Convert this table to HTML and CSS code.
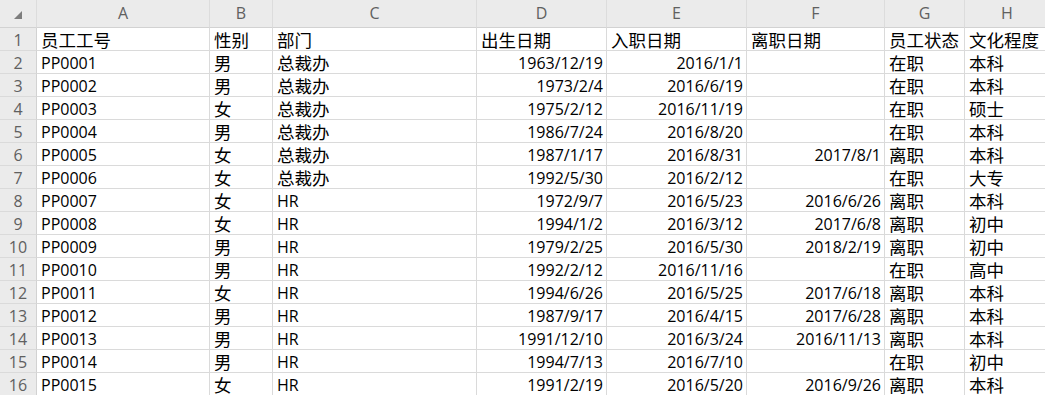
FILE: index.html
```html
<!DOCTYPE html>
<html lang="zh-CN">
<head>
<meta charset="utf-8">
<title>员工信息表</title>
<link rel="stylesheet" href="styles.css">
</head>
<body>
<div class="sheet">
  <div class="row head">
    <div class="corner"></div>
    <div class="col">A</div><div class="col">B</div><div class="col">C</div><div class="col">D</div>
    <div class="col">E</div><div class="col">F</div><div class="col">G</div><div class="col">H</div>
  </div>
  <div class="row">
    <div class="num">1</div>
    <div class="c zh">员工工号</div><div class="c zh">性别</div><div class="c zh">部门</div><div class="c zh">出生日期</div>
    <div class="c zh">入职日期</div><div class="c zh">离职日期</div><div class="c zh">员工状态</div><div class="c zh">文化程度</div>
  </div>
  <div class="row">
    <div class="num">2</div>
    <div class="c">PP0001</div><div class="c zh">男</div><div class="c zh">总裁办</div><div class="c r">1963/12/19</div>
    <div class="c r">2016/1/1</div><div class="c r"></div><div class="c zh">在职</div><div class="c zh">本科</div>
  </div>
  <div class="row">
    <div class="num">3</div>
    <div class="c">PP0002</div><div class="c zh">男</div><div class="c zh">总裁办</div><div class="c r">1973/2/4</div>
    <div class="c r">2016/6/19</div><div class="c r"></div><div class="c zh">在职</div><div class="c zh">本科</div>
  </div>
  <div class="row">
    <div class="num">4</div>
    <div class="c">PP0003</div><div class="c zh">女</div><div class="c zh">总裁办</div><div class="c r">1975/2/12</div>
    <div class="c r">2016/11/19</div><div class="c r"></div><div class="c zh">在职</div><div class="c zh">硕士</div>
  </div>
  <div class="row">
    <div class="num">5</div>
    <div class="c">PP0004</div><div class="c zh">男</div><div class="c zh">总裁办</div><div class="c r">1986/7/24</div>
    <div class="c r">2016/8/20</div><div class="c r"></div><div class="c zh">在职</div><div class="c zh">本科</div>
  </div>
  <div class="row">
    <div class="num">6</div>
    <div class="c">PP0005</div><div class="c zh">女</div><div class="c zh">总裁办</div><div class="c r">1987/1/17</div>
    <div class="c r">2016/8/31</div><div class="c r">2017/8/1</div><div class="c zh">离职</div><div class="c zh">本科</div>
  </div>
  <div class="row">
    <div class="num">7</div>
    <div class="c">PP0006</div><div class="c zh">女</div><div class="c zh">总裁办</div><div class="c r">1992/5/30</div>
    <div class="c r">2016/2/12</div><div class="c r"></div><div class="c zh">在职</div><div class="c zh">大专</div>
  </div>
  <div class="row">
    <div class="num">8</div>
    <div class="c">PP0007</div><div class="c zh">女</div><div class="c">HR</div><div class="c r">1972/9/7</div>
    <div class="c r">2016/5/23</div><div class="c r">2016/6/26</div><div class="c zh">离职</div><div class="c zh">本科</div>
  </div>
  <div class="row">
    <div class="num">9</div>
    <div class="c">PP0008</div><div class="c zh">女</div><div class="c">HR</div><div class="c r">1994/1/2</div>
    <div class="c r">2016/3/12</div><div class="c r">2017/6/8</div><div class="c zh">离职</div><div class="c zh">初中</div>
  </div>
  <div class="row">
    <div class="num">10</div>
    <div class="c">PP0009</div><div class="c zh">男</div><div class="c">HR</div><div class="c r">1979/2/25</div>
    <div class="c r">2016/5/30</div><div class="c r">2018/2/19</div><div class="c zh">离职</div><div class="c zh">初中</div>
  </div>
  <div class="row">
    <div class="num">11</div>
    <div class="c">PP0010</div><div class="c zh">男</div><div class="c">HR</div><div class="c r">1992/2/12</div>
    <div class="c r">2016/11/16</div><div class="c r"></div><div class="c zh">在职</div><div class="c zh">高中</div>
  </div>
  <div class="row">
    <div class="num">12</div>
    <div class="c">PP0011</div><div class="c zh">女</div><div class="c">HR</div><div class="c r">1994/6/26</div>
    <div class="c r">2016/5/25</div><div class="c r">2017/6/18</div><div class="c zh">离职</div><div class="c zh">本科</div>
  </div>
  <div class="row">
    <div class="num">13</div>
    <div class="c">PP0012</div><div class="c zh">男</div><div class="c">HR</div><div class="c r">1987/9/17</div>
    <div class="c r">2016/4/15</div><div class="c r">2017/6/28</div><div class="c zh">离职</div><div class="c zh">本科</div>
  </div>
  <div class="row">
    <div class="num">14</div>
    <div class="c">PP0013</div><div class="c zh">男</div><div class="c">HR</div><div class="c r">1991/12/10</div>
    <div class="c r">2016/3/24</div><div class="c r">2016/11/13</div><div class="c zh">离职</div><div class="c zh">本科</div>
  </div>
  <div class="row">
    <div class="num">15</div>
    <div class="c">PP0014</div><div class="c zh">男</div><div class="c">HR</div><div class="c r">1994/7/13</div>
    <div class="c r">2016/7/10</div><div class="c r"></div><div class="c zh">在职</div><div class="c zh">初中</div>
  </div>
  <div class="row">
    <div class="num">16</div>
    <div class="c">PP0015</div><div class="c zh">女</div><div class="c">HR</div><div class="c r">1991/2/19</div>
    <div class="c r">2016/5/20</div><div class="c r">2016/9/26</div><div class="c zh">离职</div><div class="c zh">本科</div>
  </div>
</div>
</body>
</html>
```

FILE: styles.css
```css
html, body {
  margin: 0;
  padding: 0;
  background: #ffffff;
  overflow: hidden;
}

.sheet {
  width: 1045px;
  height: 395px;
  overflow: hidden;
  font-family: "Open Sans", "Noto Sans CJK SC", sans-serif;
  font-size: 16px;
  color: #000;
}

.row {
  display: grid;
  grid-template-columns: 37px 173px 63px 204px 130px 140px 138px 80px 85px;
  height: 23px;
}

.row.head {
  height: 28px;
}

.row > div {
  box-sizing: border-box;
  border-right: 1px solid #dadada;
  border-bottom: 1px solid #dadada;
  white-space: nowrap;
  overflow: hidden;
}

.corner {
  background: #ebebeb;
  display: flex;
  justify-content: flex-end;
  align-items: flex-end;
  padding: 0 14px 8px 0;
}

.corner::after {
  content: "";
  width: 8px;
  height: 8px;
  background: #7d7d7d;
  clip-path: polygon(100% 0, 100% 100%, 0 100%);
}

.col {
  background: #ebebeb;
  color: #606060;
  text-align: center;
  padding-top: 4px;
  line-height: 19px;
}

.row.head > div {
  border-bottom-color: #d2d2d2;
  border-right-color: #dcdcdc;
}

.num {
  background: #ebebeb;
  color: #606060;
  text-align: center;
  padding-top: 3px;
  line-height: 19px;
  border-right-color: #d2d2d2 !important;
}

.c {
  padding: 3px 3px 0 4px;
  line-height: 19px;
}

.c.r {
  text-align: right;
  padding-right: 3px;
}

.c.zh {
  font-size: 17.5px;
  padding-left: 4px;
}
```
